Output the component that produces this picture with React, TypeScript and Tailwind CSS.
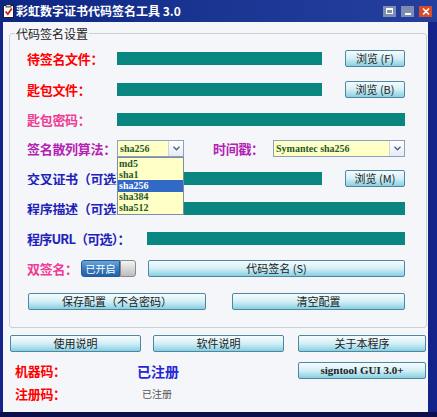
import React from "react";

const CJK = "font-['Noto_Sans_CJK_SC','Noto_Sans',sans-serif]";
const SERIF = "font-['Liberation_Serif',serif]";

function Btn({ className, children, serif }: { className: string; children: React.ReactNode; serif?: boolean }) {
  return (
    <div
      className={`${className} h-[17px] shrink-0 flex items-center justify-center rounded-[2px] border border-[#4f86a2] bg-gradient-to-b from-[#f6fcfe] via-[#d3eff6] to-[#86cfe1] leading-none text-[#222] ${
        serif ? `${SERIF} font-bold text-[11px]` : `${CJK} text-[11px]`
      }`}
    >
      {children}
    </div>
  );
}

function Bar({ className }: { className: string }) {
  return <div className={`${className} h-[13px] shrink-0 bg-[#0a8680]`} />;
}

function Label({ className, children }: { className: string; children: React.ReactNode }) {
  return (
    <div className={`${className} shrink-0 whitespace-nowrap text-[13px] font-bold leading-none tracking-[-0.3px] ${CJK}`}>
      {children}
    </div>
  );
}

function Chevron() {
  return (
    <div className="w-[15px] h-full shrink-0 flex items-center justify-center bg-gradient-to-b from-[#ffffff] to-[#e6ebf3] border-l border-[#c9d5e6]">
      <svg width="7" height="5" viewBox="0 0 7 5">
        <path d="M0.5 0.8 L3.5 3.8 L6.5 0.8" stroke="#4d6185" strokeWidth="1.3" fill="none" />
      </svg>
    </div>
  );
}

function Select({ className, text }: { className: string; text: string }) {
  return (
    <div className={`${className} h-[17px] shrink-0 flex items-stretch border border-[#8aa2c0] bg-[#ffffc6]`}>
      <div className={`flex-1 flex items-center pl-[2px] ${SERIF} font-bold text-[10px] text-[#1f5a2c] whitespace-nowrap overflow-hidden`}>
        {text}
      </div>
      <Chevron />
    </div>
  );
}

export default function App() {
  const items = ["md5", "sha1", "sha256", "sha384", "sha512"];
  return (
    <div className="w-[437px] h-[417px] bg-[#13238a] flex flex-col overflow-hidden">
      {/* title bar */}
      <div className="h-[22px] shrink-0 flex items-center bg-gradient-to-r from-[#0e2683] via-[#1a3592] to-[#243f9e]">
        <div className="ml-[3px] w-[11px] h-[14px] shrink-0">
          <svg width="11" height="14" viewBox="0 0 11 14">
            <rect x="0.5" y="1.5" width="10" height="12" fill="#ffffff" stroke="#202020" />
            <rect x="3" y="0.5" width="5" height="2.5" fill="#d0d0d0" stroke="#202020" strokeWidth="0.8" />
            <path d="M2.5 7.5 L4.8 10 L8.8 4.5" stroke="#d01818" strokeWidth="1.8" fill="none" />
          </svg>
        </div>
        <div className={`ml-[2px] text-[12px] font-bold text-white leading-none ${CJK}`}>彩虹数字证书代码签名工具 3.0</div>
        <div className="ml-auto mr-[5px] flex items-center gap-[5px]">
          <div className="w-[13px] h-[11px] bg-[#7d8cb0] flex items-center justify-center">
            <div className="w-[7px] h-[6px] border border-white border-t-2" />
          </div>
          <div className="w-[13px] h-[11px] bg-[#7d8cb0] flex items-end justify-center pb-[2px]">
            <div className="w-[6px] h-[2px] bg-white" />
          </div>
          <div className="w-[13px] h-[11px] bg-[#d84a28] flex items-center justify-center">
            <svg width="8" height="7" viewBox="0 0 8 7">
              <path d="M1 0.5 L7 6.5 M7 0.5 L1 6.5" stroke="#ffffff" strokeWidth="1.6" />
            </svg>
          </div>
        </div>
      </div>

      {/* body */}
      <div className="flex h-[390px] shrink-0">
        <div className="w-[3px] shrink-0 bg-[#14238a]" />
        <div className="w-[425px] h-[390px] bg-[#f4f6f9] flex flex-col">
          {/* group box */}
          <div className="mt-[11px] ml-[6px] w-[418px] h-[295px] border border-[#cbd0d6] rounded-[3px] flex flex-col">
            <div className={`-mt-[7px] ml-[5px] h-[14px] w-fit px-[1px] bg-[#f4f6f9] text-[12px] leading-[14px] text-[#222] ${CJK}`}>
              代码签名设置
            </div>

            {/* row 1 */}
            <div className="mt-[8px] h-[19px] flex items-center pl-[17px]">
              <Label className="w-[90px] text-[#ff0000]">待签名文件：</Label>
              <Bar className="w-[205px]" />
              <Btn className="ml-[23px] w-[60px]">浏览 (F)</Btn>
            </div>
            {/* row 2 */}
            <div className="mt-[12px] h-[19px] flex items-center pl-[17px]">
              <Label className="w-[90px] text-[#ff0000]">匙包文件：</Label>
              <Bar className="w-[205px]" />
              <Btn className="ml-[23px] w-[60px]">浏览 (B)</Btn>
            </div>
            {/* row 3 */}
            <div className="mt-[11px] h-[19px] flex items-center pl-[17px]">
              <Label className="w-[90px] text-[#ee3b94]">匙包密码：</Label>
              <Bar className="w-[288px]" />
            </div>
            {/* row 4 */}
            <div className="mt-[10px] h-[19px] flex items-center pl-[17px] relative z-10">
              <Label className="w-[90px] text-[#b41fb4]">签名散列算法：</Label>
              <div className="relative w-[67px] h-[17px] shrink-0">
                <Select className="w-[67px]" text="sha256" />
                <div className="absolute left-0 top-[17px] w-[67px] h-[58px] border border-[#7a8ea8] bg-[#ffffc6] flex flex-col">
                  {items.map((it) => (
                    <div
                      key={it}
                      className={
                        it === "sha256"
                          ? `h-[11.2px] flex items-center pl-[1px] bg-[#3169c6] text-white ${SERIF} font-bold text-[10px] leading-none`
                          : `h-[11.2px] flex items-center pl-[1px] text-[#1f5a2c] ${SERIF} font-bold text-[10px] leading-none`
                      }
                    >
                      {it}
                    </div>
                  ))}
                </div>
              </div>
              <Label className="ml-[29px] w-[60px] text-[#b41fb4]">时间戳：</Label>
              <Select className="w-[132px]" text="Symantec sha256" />
            </div>
            {/* row 5 */}
            <div className="mt-[11px] h-[19px] flex items-center pl-[17px]">
              <Label className="w-[90px] overflow-hidden text-[#1e22b8]">交叉证书（可选）：</Label>
              <Bar className="w-[205px]" />
              <Btn className="ml-[23px] w-[60px]">浏览 (M)</Btn>
            </div>
            {/* row 6 */}
            <div className="mt-[11px] h-[19px] flex items-center pl-[17px]">
              <Label className="w-[90px] overflow-hidden text-[#1e22b8]">程序描述（可选）：</Label>
              <Bar className="w-[288px]" />
            </div>
            {/* row 7 */}
            <div className="mt-[11px] h-[19px] flex items-center pl-[17px]">
              <Label className="w-[120px] text-[#1e22b8] tracking-[-0.8px]">程序URL（可选）：</Label>
              <Bar className="w-[258px]" />
            </div>
            {/* row 8 */}
            <div className="mt-[11px] h-[19px] flex items-center pl-[17px]">
              <Label className="w-[54px] text-[#ee3b94]">双签名：</Label>
              <div className="flex h-[17px] shrink-0">
                <div className={`w-[39px] h-[17px] rounded-l-[3px] border border-[#245a92] bg-gradient-to-b from-[#6aa6dc] via-[#3a7cc0] to-[#2262a6] flex items-center justify-center text-[10px] text-white leading-none ${CJK}`}>
                  已开启
                </div>
                <div className="w-[16px] h-[17px] rounded-r-[3px] border border-[#8a8a8a] bg-gradient-to-b from-[#f4f4f4] to-[#bdbdbd]" />
              </div>
              <Btn className="ml-[12px] w-[257px]">代码签名 (S)</Btn>
            </div>
            {/* row 9 */}
            <div className="mt-[14px] h-[19px] flex items-center pl-[18px]">
              <Btn className="w-[178px]">保存配置（不含密码）</Btn>
              <Btn className="ml-[26px] w-[173px]">清空配置</Btn>
            </div>
          </div>

          {/* bottom buttons */}
          <div className="mt-[7px] ml-[7px] flex items-center">
            <Btn className="w-[131px]">使用说明</Btn>
            <Btn className="ml-[12px] w-[131px]">软件说明</Btn>
            <Btn className="ml-[14px] w-[128px]">关于本程序</Btn>
          </div>
          <div className="mt-[10px] ml-[12px] h-[17px] flex items-center">
            <Label className="w-[122px] text-[#ff0000]">机器码：</Label>
            <div className={`w-[161px] text-[14px] font-bold leading-none text-[#2626d6] ${CJK}`}>已注册</div>
            <Btn className="w-[128px]" serif>signtool GUI 3.0+</Btn>
          </div>
          <div className="mt-[6px] ml-[12px] h-[17px] flex items-center">
            <Label className="w-[127px] text-[#ff0000]">注册码：</Label>
            <div className={`text-[10px] leading-none text-[#555] ${CJK}`}>已注册</div>
          </div>
        </div>
        <div className="flex-1 bg-[#14238a]" />
      </div>
      <div className="flex-1 bg-[#0c0f4a]" />
    </div>
  );
}
